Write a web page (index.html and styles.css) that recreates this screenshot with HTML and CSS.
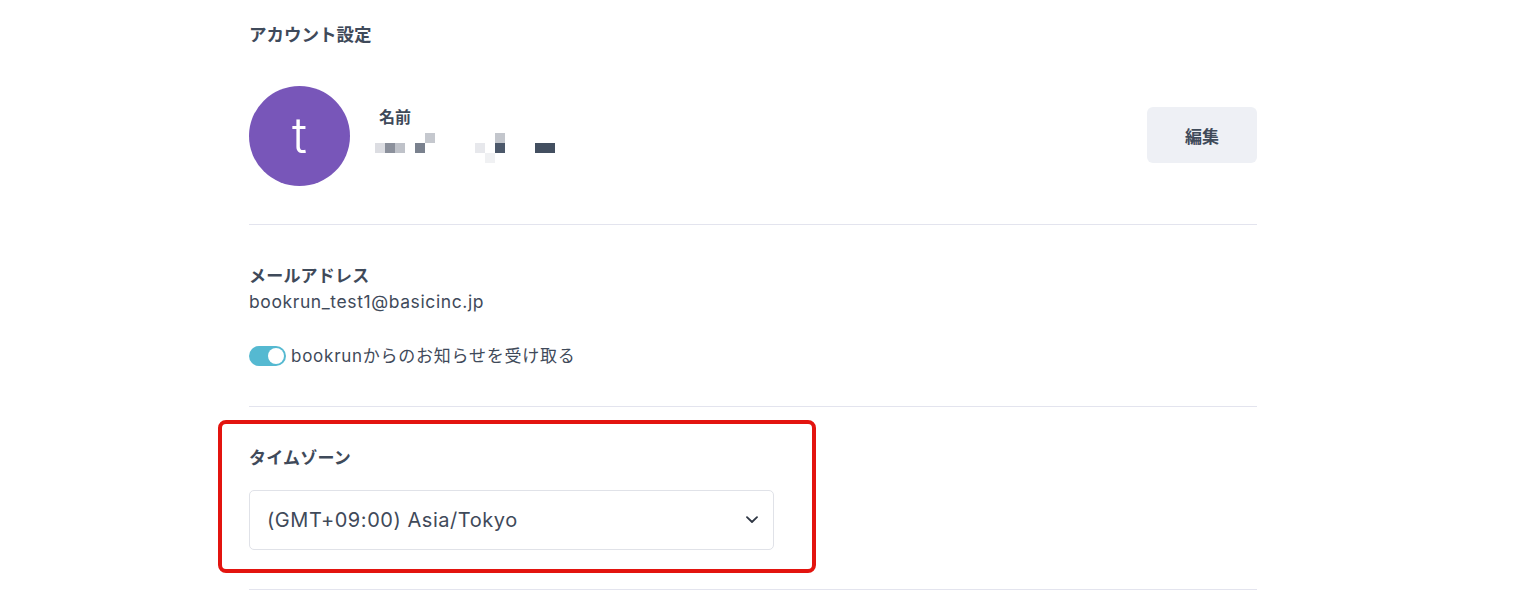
FILE: index.html
```html
<!DOCTYPE html>
<html lang="ja">
<head>
<meta charset="utf-8">
<title>アカウント設定</title>
<link rel="stylesheet" href="styles.css">
</head>
<body>
<main class="page">
  <h1 class="title">アカウント設定</h1>

  <section class="profile">
    <div class="avatar">t</div>
    <div class="name-block">
      <div class="label-sm">名前</div>
      <div class="mosaic" aria-label="名前（モザイク）">
        <span class="px p1"></span>
        <span class="px p2"></span>
        <span class="px p3"></span>
        <span class="px p4"></span>
        <span class="px p5"></span>
        <span class="px p6"></span>
        <span class="px p7"></span>
        <span class="px p8"></span>
        <span class="px p9"></span>
        <span class="px p10"></span>
      </div>
    </div>
    <button class="edit-btn" type="button">編集</button>
  </section>

  <section class="block email">
    <div class="label">メールアドレス</div>
    <div class="value">bookrun_test1@basicinc.jp</div>
    <label class="toggle-row">
      <span class="toggle"><span class="knob"></span></span>
      <span class="toggle-text">bookrunからのお知らせを受け取る</span>
    </label>
  </section>

  <section class="block timezone">
    <div class="highlight"></div>
    <div class="label">タイムゾーン</div>
    <div class="select">
      <span class="select-text">(GMT+09:00) Asia/Tokyo</span>
      <svg class="chevron" width="12" height="8" viewBox="0 0 12 8" aria-hidden="true">
        <path d="M1 1.2 L6 6 L11 1.2" fill="none" stroke="#2f3744" stroke-width="1.8" stroke-linecap="round" stroke-linejoin="round"/>
      </svg>
    </div>
  </section>
  <div class="end-rule"></div>
</main>
</body>
</html>
```

FILE: styles.css
```css
* { box-sizing: border-box; }

html, body {
  margin: 0;
  padding: 0;
  background: #ffffff;
}

body {
  font-family: "Inter", "Noto Sans CJK JP", sans-serif;
  color: #3f4a5a;
}

.page {
  width: 1008px;
  margin-left: 249px;
  padding-top: 20px;
}

.title {
  margin: 0;
  font-size: 17.5px;
  line-height: 29px;
  font-weight: 700;
}

.profile {
  display: flex;
  align-items: flex-start;
  margin-top: 37px;
  padding-bottom: 38px;
}

.avatar {
  width: 101px;
  height: 100px;
  border-radius: 50%;
  background: #7856b9;
  color: #ffffff;
  font-size: 50px;
  line-height: 98px;
  text-align: center;
  font-family: "Inter", sans-serif;
  font-weight: 300;
  flex: none;
}

.name-block {
  margin-left: 29px;
  padding-top: 19px;
  flex: 1;
}

.label-sm {
  font-size: 16px;
  line-height: 24px;
  font-weight: 700;
}

.mosaic {
  display: grid;
  grid-template-columns: repeat(18, 10px);
  grid-template-rows: repeat(3, 10px);
  margin-top: 4px;
  margin-left: -4px;
}

.px { display: block; }
.p1 { grid-column: 1; grid-row: 2; background: #dcdde2; }
.p2 { grid-column: 2; grid-row: 2; background: #8b909b; }
.p3 { grid-column: 3; grid-row: 2; background: #bfc2c9; }
.p4 { grid-column: 5; grid-row: 2; background: #7a818e; }
.p5 { grid-column: 6; grid-row: 1; background: #c5c8ce; }
.p6 { grid-column: 11; grid-row: 2; background: #e7e8ec; }
.p7 { grid-column: 12; grid-row: 3; background: #f0f1f3; }
.p8 { grid-column: 13; grid-row: 1; background: #c3c6cc; }
.p9 { grid-column: 13; grid-row: 2; background: #4c586a; }
.p10 { grid-column: 17 / span 2; grid-row: 2; background: #434f60; }

.edit-btn {
  align-self: flex-start;
  margin-top: 21px;
  width: 110px;
  height: 56px;
  border: none;
  border-radius: 6px;
  background: #eef0f5;
  color: #3f4a5a;
  font-family: inherit;
  font-size: 17px;
  font-weight: 700;
  padding: 0;
}

.block {
  border-top: 1px solid #e3e4ee;
  padding-top: 39px;
}

.label {
  font-size: 17px;
  line-height: 25px;
  font-weight: 700;
  letter-spacing: 0.2px;
}

.email { padding-bottom: 37px; }

.value {
  font-size: 17.5px;
  line-height: 26px;
  letter-spacing: 0.6px;
}

.toggle-row {
  display: flex;
  align-items: center;
  margin-top: 28px;
  height: 26px;
  gap: 5px;
}

.toggle {
  position: relative;
  width: 37px;
  height: 20px;
  border-radius: 10px;
  background: #55b9d1;
  flex: none;
}

.knob {
  position: absolute;
  right: 2px;
  top: 2px;
  width: 16px;
  height: 16px;
  border-radius: 50%;
  background: #ffffff;
}

.toggle-text {
  font-size: 17px;
  line-height: 26px;
  letter-spacing: 0.75px;
}

.timezone {
  position: relative;
  padding-bottom: 39px;
}

.highlight {
  position: absolute;
  left: -31px;
  top: 13px;
  width: 598px;
  height: 153px;
  border: 4px solid #e3140f;
  border-radius: 8px;
  pointer-events: none;
}

.select {
  display: flex;
  align-items: center;
  justify-content: space-between;
  margin-top: 19px;
  width: 525px;
  height: 60px;
  border: 1px solid #e0e2e8;
  border-radius: 5px;
  padding: 0 15px 0 17px;
}

.select-text {
  font-size: 20px;
  line-height: 28px;
  letter-spacing: 0.55px;
}

.chevron { flex: none; }

.end-rule {
  border-top: 1px solid #e3e4ee;
}
```
